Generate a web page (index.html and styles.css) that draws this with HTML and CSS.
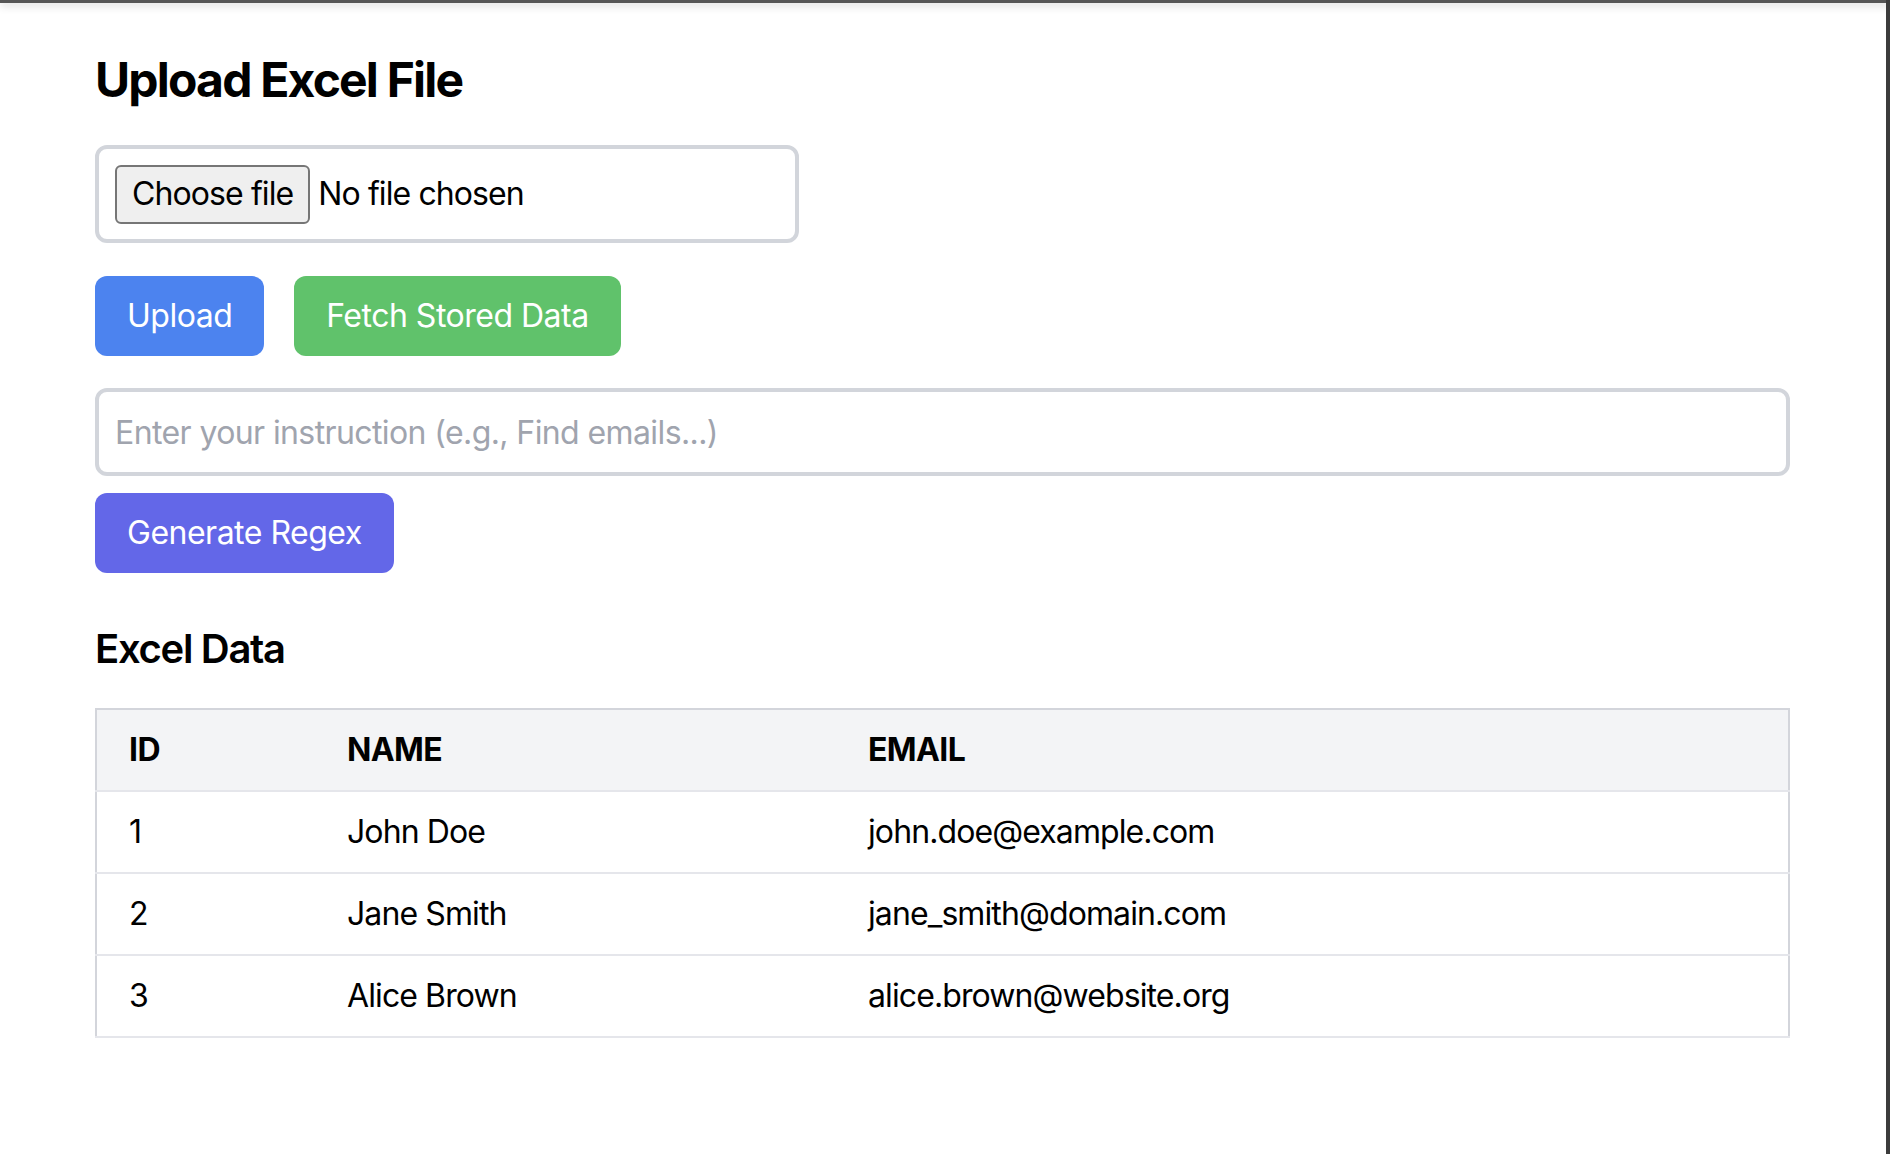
FILE: index.html
```html
<!DOCTYPE html>
<html lang="en">
<head>
<meta charset="utf-8">
<title>Upload Excel File</title>
<link rel="stylesheet" href="styles.css">
</head>
<body>
<div class="frame-top"></div>
<div class="frame-right"></div>
<main class="page">
  <h1 class="title">Upload Excel File</h1>
  <div class="file-box">
    <span class="file-btn">Choose file</span>
    <span class="file-name">No file chosen</span>
  </div>
  <div class="actions">
    <button class="btn btn-blue" type="button">Upload</button>
    <button class="btn btn-green" type="button">Fetch Stored Data</button>
  </div>
  <input class="instruction" type="text" placeholder="Enter your instruction (e.g., Find emails...)">
  <div class="regex-row">
    <button class="btn btn-indigo" type="button">Generate Regex</button>
  </div>
  <h2 class="subtitle">Excel Data</h2>
  <table class="data">
    <thead>
      <tr>
        <th class="col-id">ID</th>
        <th class="col-name">NAME</th>
        <th>EMAIL</th>
      </tr>
    </thead>
    <tbody>
      <tr><td>1</td><td>John Doe</td><td>john.doe@example.com</td></tr>
      <tr><td>2</td><td>Jane Smith</td><td>jane_smith@domain.com</td></tr>
      <tr><td>3</td><td>Alice Brown</td><td>alice.brown@website.org</td></tr>
    </tbody>
  </table>
</main>
</body>
</html>
```

FILE: styles.css
```css
* { box-sizing: border-box; }

html, body {
  margin: 0;
  padding: 0;
  background: #ffffff;
}

body {
  font-family: "Inter", "Noto Sans", "Liberation Sans", sans-serif;
  color: #000000;
  font-size: 32px;
  line-height: 48px;
  letter-spacing: -0.9px;
}

.frame-top {
  position: fixed;
  top: 0;
  left: 0;
  right: 0;
  height: 3px;
  background: #555555;
  box-shadow: 0 2px 8px rgba(0, 0, 0, 0.28);
  z-index: 10;
}

.frame-right {
  position: fixed;
  top: 0;
  right: 0;
  bottom: 0;
  width: 4px;
  background: #3c3c3c;
  z-index: 11;
}

.page {
  padding: 48px 100px 0 95px;
}

.title {
  margin: 0 0 33px;
  font-size: 48px;
  line-height: 64px;
  font-weight: 700;
  letter-spacing: -1.8px;
}

.file-box {
  width: 704px;
  height: 98px;
  border: 4px solid #d2d5db;
  border-radius: 12px;
  padding: 15px 16px;
  display: flex;
  align-items: center;
  gap: 8px;
  margin-bottom: 33px;
}

.file-btn {
  display: inline-flex;
  align-items: center;
  height: 59px;
  padding: 0 15px;
  background: #efefef;
  border: 2px solid #767676;
  border-radius: 6px;
  color: #000;
}

.file-name {
  color: #000;
}

.actions {
  display: flex;
  gap: 30px;
  margin-bottom: 32px;
}

.btn {
  font-family: inherit;
  font-size: 32px;
  line-height: 48px;
  letter-spacing: -0.5px;
  font-weight: 400;
  color: #ffffff;
  border: 0;
  border-radius: 12px;
  padding: 16px 32px;
  cursor: pointer;
}

.btn-blue { background: #4c83ef; }
.btn-green { background: #60c26b; }
.btn-indigo { background: #6367e8; }

.instruction {
  display: block;
  width: 1695px;
  height: 88px;
  border: 4px solid #d2d5db;
  border-radius: 12px;
  padding: 16px;
  font-family: inherit;
  font-size: 32px;
  line-height: 48px;
  letter-spacing: -0.6px;
  color: #000;
  margin: 0 0 17px;
  outline: none;
}

.instruction::placeholder {
  color: #a0a4ae;
}

.regex-row {
  display: flex;
}

.subtitle {
  margin: 48px 0 31px;
  font-size: 40px;
  line-height: 56px;
  font-weight: 600;
  letter-spacing: -1.3px;
}

.data {
  width: 1695px;
  border-collapse: collapse;
  border: 2px solid #d3d5db;
}

.data th,
.data td {
  text-align: left;
  padding: 16px 32px;
  line-height: 48px;
  font-size: 32px;
}

.data th {
  font-weight: 700;
  background: #f3f4f6;
  letter-spacing: -0.6px;
}

.data tr {
  border-bottom: 2px solid #e5e6eb;
}

.col-id { width: 219px; }
.col-name { width: 521px; }
```
